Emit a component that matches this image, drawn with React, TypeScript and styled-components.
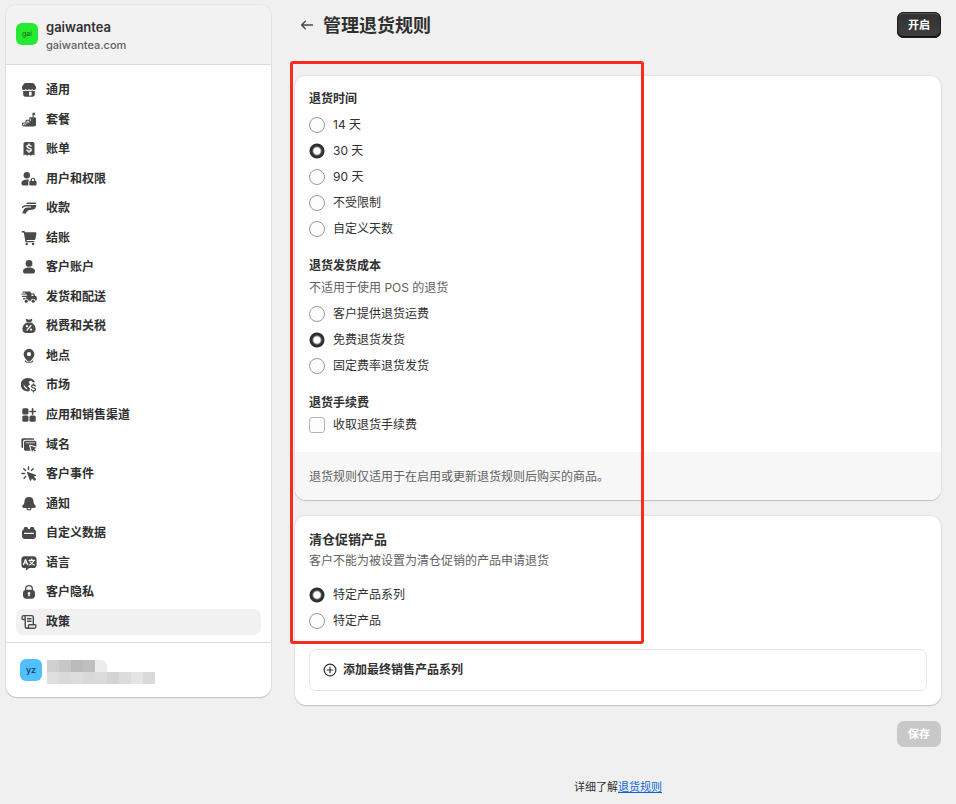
import React, { useState } from "react";
import styled, { createGlobalStyle, css } from "styled-components";

const GlobalStyle = createGlobalStyle`
  *, *::before, *::after { box-sizing: border-box; }
  body {
    margin: 0;
    background: #f0f0f0;
    color: #303030;
    font-family: Inter, "Noto Sans CJK SC", sans-serif;
    font-size: 12px;
    line-height: 18px;
  }
  button, input { font: inherit; margin: 0; }
  h1, h2, h3, p, ul, fieldset { margin: 0; padding: 0; border: 0; min-width: 0; }
`;

const cardShadow = css`
  box-shadow: 0 1px 1px rgba(0, 0, 0, 0.16), 0 0 1px 1px rgba(0, 0, 0, 0.05);
`;

const Page = styled.div`
  display: grid;
  grid-template-columns: 265px minmax(0, 1fr);
  align-items: start;
  column-gap: 24px;
  padding: 5px 15px 8px 6px;
`;

const Sidebar = styled.aside`
  display: flex;
  flex-direction: column;
  min-height: 692px;
  overflow: hidden;
  border-radius: 11px;
  background: #fff;
  ${cardShadow}
`;

const StoreHeader = styled.header`
  display: flex;
  gap: 8px;
  padding: 13px 10px 10px;
  border-bottom: 1px solid #dcdcdc;
  background: #f2f2f2;
`;

const Avatar = styled.span<{ $color: string }>`
  display: grid;
  place-items: center;
  flex: none;
  width: 22px;
  height: 22px;
  border-radius: 6px;
  background: ${(p) => p.$color};
`;

const StoreAvatar = styled(Avatar)`
  margin-top: 5px;
  color: #14641a;
  font-size: 7px;
`;

const UserAvatar = styled(Avatar)`
  color: #10405c;
  font-size: 9px;
  font-weight: 500;
`;

const StoreName = styled.p`
  font-size: 13px;
  font-weight: 600;
`;

const StoreDomain = styled.p`
  color: #616161;
  font-size: 11px;
  font-weight: 500;
`;

const Nav = styled.nav`
  display: flex;
  flex: 1;
  padding: 12px 10px 7px;
`;

const NavList = styled.ul`
  display: flex;
  flex: 1;
  flex-direction: column;
  justify-content: space-between;
  list-style: none;
`;

const NavLink = styled.a<{ $active: boolean }>`
  display: flex;
  align-items: center;
  gap: 9px;
  height: 26px;
  padding: 0 5px;
  border-radius: 7px;
  background: ${(p) => (p.$active ? "#f1f1f1" : "transparent")};
  color: #303030;
  font-weight: 600;
  text-decoration: none;
`;

const NavIcon = styled.svg`
  flex: none;
  width: 16px;
  height: 16px;
  fill: #4a4a4a;
  color: #4a4a4a;
`;

const UserRow = styled.footer`
  display: flex;
  gap: 5px;
  padding: 16px 14px 13px;
  border-top: 1px solid #dcdcdc;
`;

const MaskedText = styled.div`
  display: grid;
  grid-template-columns: repeat(9, 12px);
  grid-auto-rows: 12px;
  padding-top: 1px;
`;

const MaskCell = styled.span<{ $tone: string; $last?: boolean }>`
  background: ${(p) => p.$tone};
  border-top-right-radius: ${(p) => (p.$last ? "6px" : "0")};
`;

const Main = styled.main`
  position: relative;
  display: flex;
  flex-direction: column;
  padding-top: 7px;
`;

const TitleBar = styled.header`
  display: flex;
  align-items: center;
  gap: 9px;
  height: 26px;
  margin-bottom: 38px;
`;

const BackLink = styled.a`
  display: flex;
  margin-left: 5px;
  color: #4a4a4a;
`;

const Title = styled.h1`
  flex: 1;
  padding-top: 2px;
  font-size: 18px;
  font-weight: 600;
  line-height: 26px;
`;

const ActionButton = styled.button`
  height: 26px;
  padding: 0 11px;
  border: 0;
  border-radius: 7px;
  background: linear-gradient(#303030, #404040);
  box-shadow: inset 0 0 0 1px #1f1f1f, inset 0 2px 0 #555, inset 0 -2px 0 #111;
  color: #fff;
  font-size: 11px;
  font-weight: 600;
  line-height: 16px;

  &:disabled {
    background: #c8c8c8;
    box-shadow: none;
  }
`;

const Card = styled.section`
  overflow: hidden;
  margin-bottom: 16px;
  border-radius: 11px;
  background: #fff;
  ${cardShadow}
`;

const CardBody = styled.div<{ $bottom: number }>`
  display: flex;
  flex-direction: column;
  gap: 13px;
  padding: 12px 14px ${(p) => p.$bottom}px;
`;

const CardNote = styled.p`
  padding: 16px 14px 14px;
  background: #f7f7f7;
  color: #616161;
`;

const Group = styled.fieldset``;

const GroupTitle = styled.legend<{ $large?: boolean }>`
  padding: 0;
  font-size: ${(p) => (p.$large ? 13 : 12)}px;
  font-weight: 600;
  line-height: 22px;
`;

const GroupHelp = styled.p`
  color: #616161;
  line-height: 22px;
`;

const Options = styled.div<{ $gap: number }>`
  display: flex;
  flex-direction: column;
  align-items: flex-start;
  padding-top: ${(p) => p.$gap}px;
`;

const OptionLabel = styled.label<{ $compact?: boolean }>`
  display: flex;
  align-items: center;
  gap: 8px;
  height: ${(p) => (p.$compact ? 22 : 26)}px;
`;

const Radio = styled.input.attrs({ type: "radio" })`
  appearance: none;
  width: 16px;
  height: 16px;
  border: 1px solid #9a9a9a;
  border-radius: 50%;
  background: #fdfdfd;

  &:checked {
    border: 0;
    background: radial-gradient(circle, #fff 3px, #303030 5px, #303030 7px, transparent 8px);
  }
`;

const Checkbox = styled.input.attrs({ type: "checkbox" })`
  appearance: none;
  width: 16px;
  height: 16px;
  border: 1px solid #b4b4b4;
  border-radius: 3px;
  background: #fdfdfd;

  &:checked {
    border: 4px solid #303030;
  }
`;

const AddButton = styled.button`
  display: flex;
  align-items: center;
  gap: 6px;
  height: 42px;
  margin-top: 2px;
  padding: 0 13px;
  border: 1px solid #e6e6e6;
  border-radius: 7px;
  background: #fff;
  color: #303030;
  font-weight: 600;
`;

const SaveRow = styled.div`
  display: flex;
  justify-content: flex-end;
`;

const LearnMore = styled.p`
  margin-top: 31px;
  font-size: 11px;
  text-align: center;

  a { color: #0e62d9; }
`;

const Highlight = styled.div`
  position: absolute;
  top: 56px;
  left: -5px;
  width: 354px;
  height: 583px;
  border: 3px solid #fb2a1e;
  border-radius: 3px;
  pointer-events: none;
`;

const icons: Record<string, React.ReactNode> = {
  store: (
    <>
      <path d="M5 1h6c1 0 1.900.4 2.500 1.200l1.300 2.200c.9 1.700-.1 3.600-1.800 3.600-1 0-1.700-.6-1.900-1.300C10.800 7.500 10.200 8 9.500 8 8.800 8 8.200 7.500 8 6.800 7.800 7.500 7.200 8 6.500 8 5.800 8 5.200 7.500 4.900 6.700 4.600 7.500 3.900 8 3 8 1.300 8 .3 6.100 1.200 4.400l1.300-2.200C3.100 1.400 4 1 5 1Z" />
      <path d="M2.200 9c1 .2 2 0 2.700-.6 1 .8 2.200.8 3.100 0 .9.8 2.100.8 3.100 0 .7.600 1.700.8 2.700.600v3.500c0 1.300-.9 2.200-2.200 2.200H4.400c-1.300 0-2.200-.9-2.200-2.200Z" />
      <path d="M8 9.800h2.600v3.700H8Z" fill="#fff" />
    </>
  ),
  plan: (
    <>
      <path d="M1 11.700c0-.7.5-1.200 1.200-1.200h2.300V9c0-.7.500-1.200 1.200-1.200h2.500V6.500c0-.8.600-1.300 1.300-1.300h4.200c.8 0 1.300.5 1.300 1.300v6c0 1.200-.8 2-2 2H3c-1.200 0-2-.8-2-2Z" />
      <path d="M11.500 5.200V.8h3l-.8 1.200.8 1.200h-1.900v2Z" />
      <path d="M2.500 13.300v-1.500h1.800v1.500M5.900 11.900V9.200h1.900v2M9.400 9V6.600" fill="none" stroke="#fff" strokeWidth=".8" />
    </>
  ),
  billing: (
    <>
      <path d="M4.300 1h7.400c1 0 1.800.8 1.800 1.800v11.700l-1.900-1.100-1.800 1.300L8 13.500l-1.800 1.200-1.800-1.300-1.900 1.100V2.800C2.500 1.800 3.300 1 4.300 1Z" />
      <path d="M10 5.200C9.700 4.500 9 4.100 8 4.100c-1.200 0-2 .6-2 1.500 0 2.200 4.200 1 4.200 3.200 0 .9-.8 1.500-2.100 1.500-1.100 0-1.900-.4-2.200-1.200M8 3v1.100m0 6.200v1.100" fill="none" stroke="#fff" strokeWidth="1.4" strokeLinecap="round" />
    </>
  ),
  users: (
    <>
      <circle cx="5.800" cy="4.200" r="3.200" />
      <path d="M.4 12c0-2.300 2.300-3.600 5.400-3.600.9 0 1.600.1 2.300.3-.5.700-.8 1.400-.8 2.300v3.400H2.200C1 14.400.4 13.300.4 12Z" />
      <path d="M9.600 10V8.600a2.400 2.400 0 0 1 4.700 0V10h.2c.7 0 1.100.4 1.100 1.100v2.200c0 .7-.4 1.100-1.100 1.100H9.400c-.7 0-1.100-.4-1.100-1.100v-2.200c0-.7.400-1.100 1.100-1.100Zm1.300 0H13V8.700a1.050 1.050 0 0 0-2.100 0Z" />
    </>
  ),
  payments: (
    <path d="M6.300 2.500h7.400c1 0 1.700.6 1.700 1.500H5Zm-1.500 2.400h10.500c-.2 2.200-1 4.300-3 4.600-2.300.4-4.500.400-5.800 1.400-.9.700-1.100 1.800-1.800 2.900L1 13.200c.9-1 1.200-2.200 1.600-3.300.5-1.400 1.900-2.400 4.100-2.500h3c.7 0 .8-.8.1-.9l-5-.1c-1.500 0-2.200 1-3.300 1.700L.7 6.900C2 6.100 3 4.900 4.800 4.900Z" />
  ),
  cart: (
    <>
      <path d="M.8 1h1.500c1 0 1.700.5 2 1.200h9.900c.8 0 1.300.6 1.200 1.400l-.8 5c-.1.900-.8 1.500-1.700 1.500H5.600l.1.900h7.600v1.300H4.500L2.900 2.900c-.1-.3-.3-.5-.6-.5H.8Z" />
      <circle cx="5.700" cy="14" r="1.200" />
      <circle cx="12.100" cy="14" r="1.200" />
    </>
  ),
  person: (
    <>
      <circle cx="8" cy="4.400" r="3.400" />
      <path d="M2 12c0-2.200 2.600-3.500 6-3.500s6 1.300 6 3.500c0 1.600-.9 2.600-2 2.600H4c-1.100 0-2-1-2-2.600Z" />
    </>
  ),
  truck: (
    <>
      <path fillRule="evenodd" d="M1.800 2.500h6.700c.9 0 1.500.6 1.500 1.500v.2h1.900c.7 0 1.200.3 1.500.9l.7 1.600 1 .6c.5.300.7.700.7 1.200v2c0 .7-.5 1.200-1.200 1.200h-.1a2.400 2.400 0 0 0-4.700 0H7.500A2.400 2.400 0 0 0 3 10.900c-.5-.2-.8-.7-.8-1.200v-.6h3V8H1.500c-.8 0-.8-1.200 0-1.200h4.400V5.600H.9c-.8 0-.8-1.200 0-1.200h3.400V3.600H1.800c-.7 0-.7-1.100 0-1.100Zm8.700 3v1.600h2.200l-.6-1.600Z" />
      <circle cx="5.200" cy="12.200" r="1.600" />
      <circle cx="12.200" cy="12.200" r="1.600" />
    </>
  ),
  tax: (
    <>
      <path d="M5.500.9 8 1.700l2.500-.8c.7 0 1 .6.7 1.200l-1 1.900H5.800l-1-1.900C4.500 1.500 4.800.9 5.500.9Z" />
      <path d="M5.600 4.600h4.800c2.600 1.500 4.200 4 4.200 6.400 0 2.600-1.600 4-4 4H5.400c-2.400 0-4-1.400-4-4 0-2.400 1.600-4.900 4.200-6.400Z" />
      <path d="m6 12.200 4-4.700" stroke="#fff" strokeWidth="1.200" strokeLinecap="round" />
      <circle cx="5.900" cy="8.200" r="1.100" fill="#fff" />
      <circle cx="10.100" cy="11.600" r="1.100" fill="#fff" />
    </>
  ),
  pin: (
    <>
      <path fillRule="evenodd" d="M8 .8a5.400 5.400 0 0 0-5.400 5.400C2.600 9 4.800 11.200 7 13.200c.6.500 1.400.5 2 0 2.200-2 4.400-4.200 4.400-7A5.400 5.400 0 0 0 8 .8Zm0 7.500a2.100 2.100 0 1 1 0-4.200 2.100 2.100 0 0 1 0 4.200Z" />
      <path d="M4.200 12.200c-.3.200-.5.500-.5.900 0 1.300 2.100 2 4.300 2s4.300-.7 4.300-2c0-.4-.2-.7-.5-.9l-1.500 1.300c-1.300 1-3.300 1-4.600 0Z" />
    </>
  ),
  market: (
    <>
      <path fillRule="evenodd" d="M8 1.200c3 0 5.500 1.900 6.400 4.600-.8-.5-1.700-.6-2.500-.3l-1.800-2.100c-1.400.6-2.700 1.300-2.300 2.300.3.800 1.500.6 1.300 1.600-.2.900-1.600.6-1.900 1.600-.3 1.100 1.400 1.200 1.600 2.300.2.800-.2 1.800-.1 2.800A6.700 6.700 0 1 1 8 1.200ZM2.600 7.200c0 2.800 1.700 4.900 4 5.400-.3-2.200-2.500-2.600-3.200-4Z" />
      <path d="M14.300 9c-.3-.7-1-1-1.900-1-1.100 0-1.800.5-1.800 1.400 0 2 3.900 1 3.900 3 0 .9-.8 1.400-2 1.400-1 0-1.700-.4-2-1.100m2-5.900V8m0 5.800v1.100" fill="none" stroke="currentColor" strokeWidth="1.300" strokeLinecap="round" />
    </>
  ),
  apps: (
    <>
      <rect x="1.300" y="1.300" width="6.200" height="6.200" rx="1.500" />
      <rect x="1.300" y="8.500" width="6.200" height="6.200" rx="1.500" />
      <rect x="8.500" y="8.500" width="6.200" height="6.200" rx="1.500" />
      <path d="M11.600 1.800v5.400M8.900 4.500h5.400" stroke="currentColor" strokeWidth="1.600" strokeLinecap="round" />
    </>
  ),
  domain: (
    <>
      <path d="M2 1.300h9.700c.9 0 1.500.6 1.500 1.500H4c-1.200 0-1.900.7-1.900 1.900v6.500C1.100 11.200.4 10.500.4 9.500V3c0-1 .7-1.700 1.600-1.700Z" />
      <path fillRule="evenodd" d="M4.800 3.800h8.800c1.100 0 1.800.7 1.800 1.800v4L9.500 7.700c-1-.3-1.600.4-1.300 1.300l1.400 4.700H4.800c-1.100 0-1.800-.7-1.800-1.800V5.600c0-1.100.7-1.800 1.800-1.800Zm-.3 1.600v.9h9.400v-.9Z" />
      <path d="m9.300 8.700 6.200 2-2.400 1.200 1.700 1.700-.9.900-1.700-1.600-1.200 2.200Z" />
    </>
  ),
  events: (
    <>
      <path d="M7.500 1v2.600M2.700 2.700l1.900 1.900M.9 7.500h2.600M3 12.300l1.700-1.700M12.200 2.700l-1.800 1.900" stroke="currentColor" strokeWidth="1.400" strokeLinecap="round" />
      <path d="M6.800 6 14.600 8.700c.6.200.6 1 0 1.200l-1.900.8 2.100 2.100c.7.700-.9 2.400-1.700 1.700l-2.200-2.100-.8 2c-.2.600-1 .600-1.200 0L6 6.800c-.2-.5.300-1 .8-.8Z" />
    </>
  ),
  bell: (
    <path d="M8 1a4.500 4.500 0 0 0-4.500 4.200c-.1 1.700-.5 2.800-1.800 4.100C.6 10.500 1.300 12 2.800 12h2.700a2.500 2.500 0 0 0 5 0h2.700c1.500 0 2.200-1.500 1.100-2.700-1.300-1.300-1.700-2.400-1.800-4.100A4.500 4.500 0 0 0 8 1ZM6.600 12h2.800a1.400 1.400 0 0 1-2.800 0Z" fillRule="evenodd" />
  ),
  data: (
    <path fillRule="evenodd" d="M4.400 2h.8c.9 0 1.500.5 1.700 1.300l.2.700h1.800l.2-.7c.2-.8.800-1.300 1.700-1.300h.8c.8 0 1.400.5 1.600 1.300l.3 1.300c1 .5 1.500 1.300 1.500 2.400v4c0 1.900-1.200 3-3.100 3H4.100c-1.900 0-3.100-1.100-3.100-3V7c0-1.100.5-1.900 1.500-2.400l.3-1.300C3 2.500 3.600 2 4.400 2ZM3.500 7.800c-.8 0-.8 1.300 0 1.300h9c.8 0 .8-1.300 0-1.300Z" />
  ),
  language: (
    <>
      <path d="M3.500 1.200h9c1.900 0 3.100 1.200 3.100 3v5.700c0 1.900-1.200 3.100-3.100 3.100H8.200l-2.300 1.900c-.5.400-1 .1-1-.4V13H3.500C1.600 13 .4 11.800.4 9.900V4.200c0-1.800 1.200-3 3.100-3Z" />
      <path d="m2.500 9.500 2-5 2 5M3.200 8h2.600M8 5.300h5.500M10.700 4v1.300M12.500 5.500c-.3 2-2 3.700-4.200 4.500M9 6.800c.8 1.500 2.200 2.700 4.300 3.200" fill="none" stroke="#fff" strokeWidth="1.200" strokeLinecap="round" strokeLinejoin="round" />
    </>
  ),
  lock: (
    <>
      <path fillRule="evenodd" d="M4 6V5a4 4 0 0 1 8 0v1c1.300.4 2 1.500 2 2.900v2.600c0 1.900-1.300 3.200-3.200 3.200H5.200C3.300 14.700 2 13.400 2 11.500V8.900C2 7.500 2.700 6.400 4 6Zm1.300-.2h5.400V5a2.700 2.700 0 0 0-5.400 0Z" />
      <path d="M8 9.500v2.200" stroke="#fff" strokeWidth="1.500" strokeLinecap="round" />
      <circle cx="8" cy="9.300" r="1.200" fill="#fff" />
    </>
  ),
  policy: (
    <path d="M3.600 5.500H2.200c-.7 0-1.100-.4-1.100-1.100V3.200c0-.9.700-1.600 1.600-1.600h8c.9 0 1.600.7 1.600 1.600v7.300M2.700 1.600c.9 0 1.500.7 1.500 1.600v9c0 1.300.7 2.100 1.800 2.100h7.200c1 0 1.700-.7 1.700-1.700v-.9c0-.6-.4-1-1-1H8.500c-.6 0-1 .4-1 1v.8c0 1-.6 1.800-1.500 1.800M6.500 4.700H10M6.500 7.200H10" fill="none" stroke="currentColor" strokeWidth="1.400" strokeLinecap="round" strokeLinejoin="round" />
  ),
};

const navItems = [
  ["store", "通用"],
  ["plan", "套餐"],
  ["billing", "账单"],
  ["users", "用户和权限"],
  ["payments", "收款"],
  ["cart", "结账"],
  ["person", "客户账户"],
  ["truck", "发货和配送"],
  ["tax", "税费和关税"],
  ["pin", "地点"],
  ["market", "市场"],
  ["apps", "应用和销售渠道"],
  ["domain", "域名"],
  ["events", "客户事件"],
  ["bell", "通知"],
  ["data", "自定义数据"],
  ["language", "语言"],
  ["lock", "客户隐私"],
  ["policy", "政策"],
];

const maskTones = [
  "#cfcfcf", "#c7c7c7", "#bababa", "#bfbfbf", "#ececec", "#fff", "#fff", "#fff", "#fff",
  "#dedede", "#dadada", "#dddddd", "#d9d9d9", "#dbdbdb", "#d4d4d4", "#dcdcdc", "#e4e4e4", "#dadada",
];

interface RadioOptionsProps {
  name: string;
  options: string[];
  initial: string;
  gap?: number;
}

function RadioOptions({ name, options, initial, gap = 2 }: RadioOptionsProps) {
  const [value, setValue] = useState(initial);
  return (
    <Options $gap={gap}>
      {options.map((option) => (
        <OptionLabel key={option}>
          <Radio name={name} checked={value === option} onChange={() => setValue(option)} />
          {option}
        </OptionLabel>
      ))}
    </Options>
  );
}

export default function App() {
  return (
    <>
      <GlobalStyle />
      <Page>
        <Sidebar>
          <StoreHeader>
            <StoreAvatar $color="#26ea2f">gai</StoreAvatar>
            <div>
              <StoreName>gaiwantea</StoreName>
              <StoreDomain>gaiwantea.com</StoreDomain>
            </div>
          </StoreHeader>
          <Nav>
            <NavList>
              {navItems.map(([icon, label]) => (
                <li key={icon}>
                  <NavLink href={`#${icon}`} $active={icon === "policy"}>
                    <NavIcon viewBox="0 0 16 16" aria-hidden="true">{icons[icon]}</NavIcon>
                    {label}
                  </NavLink>
                </li>
              ))}
            </NavList>
          </Nav>
          <UserRow>
            <UserAvatar $color="#52bfff">yz</UserAvatar>
            <MaskedText aria-hidden="true">
              {maskTones.map((tone, i) => (
                <MaskCell key={i} $tone={tone} $last={i === 4} />
              ))}
            </MaskedText>
          </UserRow>
        </Sidebar>

        <Main>
          <TitleBar>
            <BackLink href="#policies" aria-label="返回">
              <svg width="14" height="14" viewBox="0 0 14 14" fill="none" stroke="currentColor" strokeWidth="1.400" strokeLinecap="round" strokeLinejoin="round">
                <path d="M12.500 7H1.800M5.300 3.300 1.600 7l3.700 3.700" />
              </svg>
            </BackLink>
            <Title>管理退货规则</Title>
            <ActionButton type="button">开启</ActionButton>
          </TitleBar>

          <Card>
            <CardBody $bottom={16}>
              <Group>
                <GroupTitle>退货时间</GroupTitle>
                <RadioOptions name="window" initial="30 天" options={["14 天", "30 天", "90 天", "不受限制", "自定义天数"]} />
              </Group>
              <Group>
                <GroupTitle>退货发货成本</GroupTitle>
                <GroupHelp>不适用于使用 POS 的退货</GroupHelp>
                <RadioOptions name="shipping" initial="免费退货发货" options={["客户提供退货运费", "免费退货发货", "固定费率退货发货"]} />
              </Group>
              <Group>
                <GroupTitle>退货手续费</GroupTitle>
                <Options $gap={0}>
                  <OptionLabel $compact>
                    <Checkbox name="fee" />
                    收取退货手续费
                  </OptionLabel>
                </Options>
              </Group>
            </CardBody>
            <CardNote>退货规则仅适用于在启用或更新退货规则后购买的商品。</CardNote>
          </Card>

          <Card>
            <CardBody $bottom={14}>
              <Group>
                <GroupTitle $large>清仓促销产品</GroupTitle>
                <GroupHelp>客户不能为被设置为清仓促销的产品申请退货</GroupHelp>
                <RadioOptions name="final-sale" gap={10} initial="特定产品系列" options={["特定产品系列", "特定产品"]} />
              </Group>
              <AddButton type="button">
                <svg width="14" height="14" viewBox="0 0 14 14" fill="none" stroke="currentColor" strokeWidth="1.200" strokeLinecap="round" aria-hidden="true">
                  <circle cx="7" cy="7" r="5.900" />
                  <path d="M7 4.200v5.600M4.200 7h5.600" />
                </svg>
                添加最终销售产品系列
              </AddButton>
            </CardBody>
          </Card>

          <SaveRow>
            <ActionButton type="button" disabled>保存</ActionButton>
          </SaveRow>
          <LearnMore>
            详细了解<a href="#return-rules">退货规则</a>
          </LearnMore>
          <Highlight />
        </Main>
      </Page>
    </>
  );
}
